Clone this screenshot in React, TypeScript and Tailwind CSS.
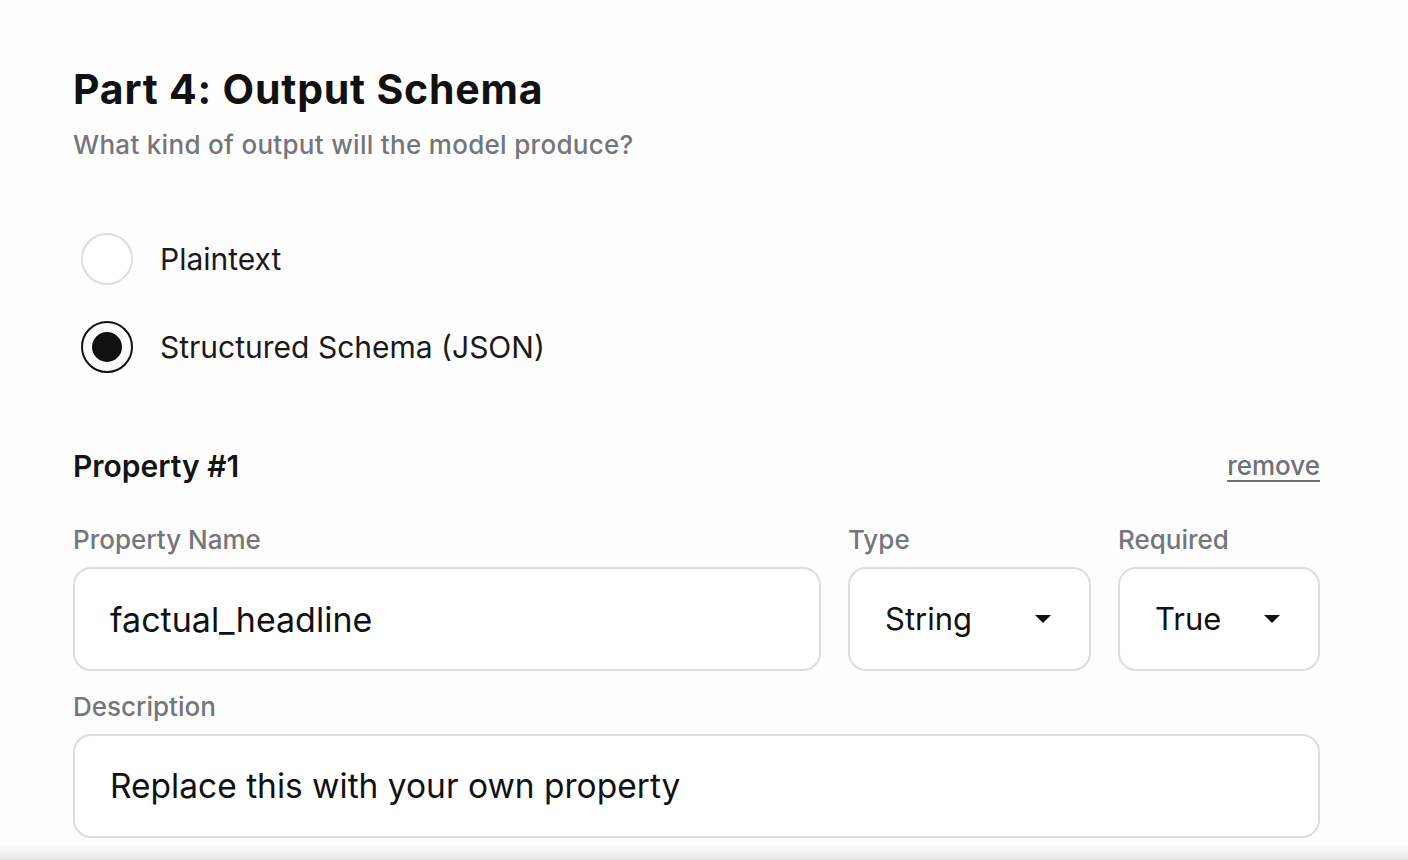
import React from 'react'

function Radio({ checked, label }: { checked?: boolean; label: string }) {
  return (
    <div className="flex items-center gap-[27px]">
      <div
        className={
          checked
            ? 'flex h-[52px] w-[52px] items-center justify-center rounded-full border-2 border-[#111]'
            : 'h-[52px] w-[52px] rounded-full border-2 border-[#dedede] bg-white'
        }
      >
        {checked && <div className="h-[30px] w-[30px] rounded-full bg-[#111]" />}
      </div>
      <span className="text-[30px] leading-[36px] text-[#1a1a1a]">{label}</span>
    </div>
  )
}

function Caret() {
  return (
    <svg width="16" height="8" viewBox="0 0 16 8" className="shrink-0">
      <path d="M0 0 L16 0 L8 8 Z" fill="#111" />
    </svg>
  )
}

function Select({ value, width }: { value: string; width: string }) {
  return (
    <div className={`${width} flex h-[104px] items-center justify-between rounded-[18px] border-2 border-[#dddddd] bg-white pl-[35px] pr-[38px]`}>
      <span className="text-[31px] text-[#111]">{value}</span>
      <Caret />
    </div>
  )
}

export default function App() {
  return (
    <div className="min-h-screen bg-[#fdfdfd] font-['Inter',sans-serif]">
      <div className="pl-[73px] pr-[88px] pt-[65px]">
        <h1 className="text-[41px] leading-[48px] font-bold tracking-[0.8px] text-[#111]">Part 4: Output Schema</h1>
        <p className="mt-[16px] text-[26px] leading-[32px] font-medium tracking-[0.3px] text-[#74767c]">What kind of output will the model produce?</p>

        <div className="mt-[72px] flex flex-col gap-[36px] pl-[8px]">
          <Radio label="Plaintext" />
          <Radio checked label="Structured Schema (JSON)" />
        </div>

        <div className="mt-[75px] flex items-center justify-between">
          <h2 className="text-[30px] leading-[36px] font-semibold text-[#141414]">Property #1</h2>
          <span className="text-[26px] leading-[32px] font-medium text-[#6f7176] underline underline-offset-[5px]">remove</span>
        </div>

        <div className="mt-[40px] flex gap-[27px]">
          <div className="flex-1">
            <div className="text-[26px] leading-[32px] font-medium text-[#74767c]">Property Name</div>
            <div className="mt-[11px] flex h-[104px] items-center rounded-[18px] border-2 border-[#dddddd] bg-white pl-[35px]">
              <span className="text-[34px] text-[#111]">factual_headline</span>
            </div>
          </div>
          <div className="w-[243px]">
            <div className="text-[26px] leading-[32px] font-medium text-[#74767c]">Type</div>
            <div className="mt-[11px]">
              <Select value="String" width="w-[243px]" />
            </div>
          </div>
          <div className="w-[202px]">
            <div className="text-[26px] leading-[32px] font-medium text-[#74767c]">Required</div>
            <div className="mt-[11px]">
              <Select value="True" width="w-[202px]" />
            </div>
          </div>
        </div>

        <div className="mt-[20px] text-[26px] leading-[32px] font-medium text-[#74767c]">Description</div>
        <div className="mt-[11px] flex h-[104px] items-center rounded-[18px] border-2 border-[#dddddd] bg-white pl-[35px]">
          <span className="text-[33.5px] text-[#111]">Replace this with your own property</span>
        </div>
      </div>
      <div className="fixed inset-x-0 bottom-0 h-[16px] bg-gradient-to-t from-[#e6e6e6] to-transparent" />
    </div>
  )
}
